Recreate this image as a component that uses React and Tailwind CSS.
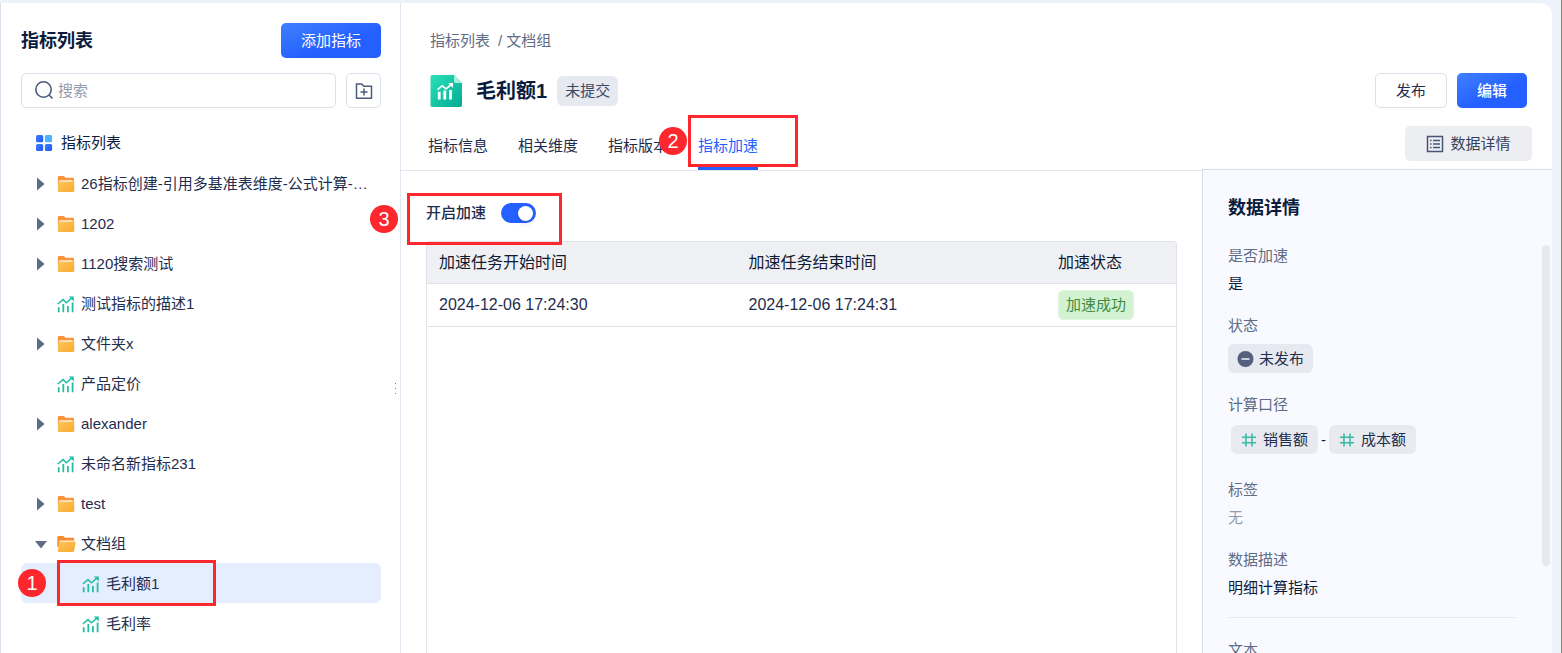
import React, { useState } from 'react';
import { clsx } from 'clsx';

const treeItems = [
  { id: 1, type: 'folder', name: '26指标创建-引用多基准表维度-公式计算-…' },
  { id: 2, type: 'folder', name: '1202' },
  { id: 3, type: 'folder', name: '1120搜索测试' },
  { id: 4, type: 'metric', name: '测试指标的描述1' },
  { id: 5, type: 'folder', name: '文件夹x' },
  { id: 6, type: 'metric', name: '产品定价' },
  { id: 7, type: 'folder', name: 'alexander' },
  { id: 8, type: 'metric', name: '未命名新指标231' },
  { id: 9, type: 'folder', name: 'test' },
  {
    id: 10,
    type: 'folder',
    name: '文档组',
    children: [
      { id: 11, type: 'metric', name: '毛利额1', step: 1 },
      { id: 12, type: 'metric', name: '毛利率' },
    ],
  },
];

const tabs = ['指标信息', '相关维度', '指标版本', '指标加速'];

const tasks = [
  { id: 1, start: '2024-12-06 17:24:30', end: '2024-12-06 17:24:31', status: '加速成功' },
];

/* Icons */
function FolderIcon() {
  return (
    <svg width="18" height="18" viewBox="0 0 18 18" className="shrink-0">
      <defs>
        <linearGradient id="folder" x1="0" y1="0" x2="1" y2="1">
          <stop offset="0" stopColor="#fcc75c" />
          <stop offset="1" stopColor="#f8a92b" />
        </linearGradient>
      </defs>
      <path d="M.8 2.400C.8 1.600 1.400 1 2.200 1h4.600l1.800 1.800h7c.8 0 1.400.6 1.400 1.400V9H.8z" fill="#fb9438" />
      <rect x="2.200" y="5.200" width="13.500" height="3" rx=".5" fill="#fff1d6" />
      <path d="M.8 6.700h16.400v8.800c0 .9-.6 1.500-1.500 1.500H2.300c-.9 0-1.500-.6-1.500-1.500z" fill="url(#folder)" />
    </svg>
  );
}

function FolderOpenIcon() {
  return (
    <svg width="20" height="18" viewBox="0 0 20 18" className="-mr-0.5 shrink-0">
      <path d="M.3 2.400C.3 1.600.9 1 1.700 1h4.600l1.800 1.800h7.700c.8 0 1.400.6 1.400 1.400V12H.3z" fill="#f88a2e" />
      <path d="M2.400 5.500h14.800V7H2.400z" fill="#fff1d6" />
      <path d="M3.200 6.700h14.400c.8 0 1.200.5 1 1.300l-1.500 7.800c-.1.700-.7 1.200-1.400 1.200H2c-.9 0-1.400-.6-1.200-1.400l1.100-7.800c.1-.7.600-1.100 1.300-1.100z" fill="url(#folder)" />
    </svg>
  );
}

function MetricIcon({ size = 18, className }) {
  return (
    <svg width={size} height={size} viewBox="0 0 18 18" fill="none" stroke="currentColor" className={clsx('shrink-0', className)}>
      <path d="M.8 9 6 4.600l3.400 3.200L15 2.900" strokeWidth="1.500" />
      <path d="M11.800 1.400h5v5z" fill="currentColor" stroke="none" />
      <path d="M1.700 12.200v5M6.300 9v8.200M10.900 11v6.200M15.600 7.500v9.700" strokeWidth="1.800" />
    </svg>
  );
}

function MetricFileIcon() {
  return (
    <svg width="32" height="34" viewBox="0 0 32 34" className="shrink-0">
      <defs>
        <linearGradient id="file" x1="0" y1="0" x2="1" y2="1">
          <stop offset="0" stopColor="#2be0b8" />
          <stop offset="1" stopColor="#03ab93" />
        </linearGradient>
      </defs>
      <path d="M2.500 1H24l8 8v22c0 1.200-.8 2-2 2H2.500c-1.200 0-2-.8-2-2V3c0-1.200.8-2 2-2z" fill="url(#file)" />
      <path d="M24 1l8 8h-6c-1.200 0-2-.8-2-2z" fill="#a5efdd" />
      <g stroke="#fff" fill="none">
        <path d="M7.500 15.600l4.700-3.700 3.900 3 5-4.300" strokeWidth="1.800" />
        <path d="M9.200 17.800V25.500M14.800 16.500v9M20.500 16v9.500" strokeWidth="2.800" />
      </g>
      <path d="M18 9h5v5z" fill="#fff" />
    </svg>
  );
}

function GridIcon() {
  return (
    <svg width="18" height="18" viewBox="0 0 18 18" className="shrink-0">
      <defs>
        <linearGradient id="cell" x1="0" y1="0" x2="1" y2="1">
          <stop offset="0" stopColor="#3d82ff" />
          <stop offset="1" stopColor="#1d55f5" />
        </linearGradient>
      </defs>
      <rect x="1" y="1" width="7.200" height="7.200" rx="1.500" fill="url(#cell)" />
      <rect x="9.900" y="1" width="7.200" height="7.200" rx="1.500" fill="#4fb3fb" />
      <rect x="1" y="9.900" width="7.200" height="7.200" rx="1.500" fill="url(#cell)" />
      <rect x="9.900" y="9.900" width="7.200" height="7.200" rx="1.500" fill="url(#cell)" />
    </svg>
  );
}

function SearchIcon() {
  return (
    <svg width="20" height="20" viewBox="0 0 20 20" fill="none" stroke="#4b5d7c" strokeWidth="1.600" className="shrink-0">
      <circle cx="9.500" cy="8.500" r="7.700" />
      <path d="M15 14l3.500 3.300" />
    </svg>
  );
}

function AddFolderIcon() {
  return (
    <svg width="18" height="18" viewBox="0 0 18 18" fill="none" stroke="#4b5d7c" strokeWidth="1.500">
      <path d="M1.500 2h5.200l2 2.300h7.800v11.900h-15z" />
      <path d="M9 6.500v7M5.500 10h7" />
    </svg>
  );
}

function ListIcon() {
  return (
    <svg width="18" height="18" viewBox="0 0 18 18" fill="none" stroke="#445578" strokeWidth="1.500">
      <rect x="1.500" y="1.500" width="15" height="15" />
      <path d="M4 5.500h1.500M4 9h1.500M4 12.500h1.500M7 5.500h7M7 9h7M7 12.500h7" strokeWidth="1.400" />
    </svg>
  );
}

function HashIcon() {
  return (
    <svg width="16" height="16" viewBox="0 0 16 16" fill="none" stroke="#3db9aa" strokeWidth="1.600">
      <path d="M5 1.500v13M11 1.500v13M1 5.200h14M1 10.800h14" />
    </svg>
  );
}

function Caret({ open }) {
  return (
    <svg width="12" height="14" viewBox="0 0 12 14" fill="#5d6b84" className="shrink-0">
      {open ? <path d="M0 4h12L6 11.500z" /> : <path d="M2 .5 9.500 7 2 13.500z" />}
    </svg>
  );
}

/* Red step markers */
function Step({ n, className }) {
  return (
    <span className={clsx('absolute z-20 flex size-7 items-center justify-center rounded-full bg-[#fd272d] text-xl text-white', className)}>
      {n}
    </span>
  );
}

function Frame({ className }) {
  return <span className={clsx('pointer-events-none absolute z-10 border-3 border-[#fd272d]', className)} />;
}

function TreeRow({ item, child, selected, onSelect }) {
  return (
    <li className="relative">
      <button
        onClick={() => onSelect(item.id)}
        className={clsx(
          'flex h-10 w-full items-center rounded-md pt-px text-left',
          child ? 'pl-[61px]' : item.type === 'metric' ? 'pl-9' : 'gap-2.5 pl-3.5',
          selected && 'bg-[#e5eeff]'
        )}
      >
        {item.type === 'folder' && <Caret open={!!item.children} />}
        <span className="flex items-center gap-1.5 whitespace-nowrap">
          {item.type === 'metric' && <MetricIcon className="text-[#25bda5]" />}
          {item.type === 'folder' && (item.children ? <FolderOpenIcon /> : <FolderIcon />)}
          {item.name}
        </span>
      </button>
      {item.step && (
        <>
          <Frame className="-top-[3px] left-9 h-[46px] w-[159px]" />
          <Step n={item.step} className="top-1.5 -left-[3px]" />
        </>
      )}
    </li>
  );
}

function Field({ label, children }) {
  return (
    <div className="mb-[22px]">
      <dt className="text-[#606c86]">{label}</dt>
      <dd className="mt-2 text-[#0b1b3d]">{children}</dd>
    </div>
  );
}

function MetricTag({ children }) {
  return (
    <span className="flex h-[29px] items-center gap-1.5 rounded-md bg-[#e8eaef] px-2.5 text-[#1f2d4d]">
      <HashIcon />
      {children}
    </span>
  );
}

export default function App() {
  const [selected, setSelected] = useState(11);
  const [activeTab, setActiveTab] = useState('指标加速');
  const [accelerated, setAccelerated] = useState(true);

  return (
    <div className="h-screen overflow-hidden border-r border-[#8c8670] bg-[#edf2fb] pt-[3px] pr-[9px] font-['Liberation_Sans','Noto_Sans_CJK_SC',sans-serif] text-[15px] leading-5 text-[#1f2d4d]">
      <div className="flex h-full rounded-tr-xl border-l border-[#dadfeb] bg-white">
        {/* Sidebar */}
        <aside className="relative w-[400px] shrink-0 border-r border-[#e3e6f0] pt-5 pr-[19px] pl-5">
          <div className="flex items-center justify-between">
            <h2 className="text-lg font-bold text-[#0b1b3d]">指标列表</h2>
            <button className="h-[35px] w-[100px] rounded-[5px] bg-linear-to-br from-[#4080ff] to-[#245fff] to-60% text-white">
              添加指标
            </button>
          </div>

          <div className="mt-[15px] flex gap-2.5">
            <label className="flex h-[35px] min-w-0 flex-1 items-center gap-1 rounded-[5px] border border-[#dcdeea] px-3">
              <SearchIcon />
              <input
                type="text"
                aria-label="搜索"
                placeholder="搜索"
                className="min-w-0 flex-1 outline-none placeholder:text-[#939cae]"
              />
            </label>
            <button aria-label="新建文件夹" className="flex size-[35px] items-center justify-center rounded-[5px] border border-[#dcdeea]">
              <AddFolderIcon />
            </button>
          </div>

          <div className="mt-[15px] flex h-10 items-center gap-2 pl-3.5 text-[#0b1b3d]">
            <GridIcon />
            指标列表
          </div>
          <ul>
            {treeItems.map((item) => (
              <React.Fragment key={item.id}>
                <TreeRow item={item} selected={selected === item.id} onSelect={setSelected} />
                {item.children?.map((c) => (
                  <TreeRow key={c.id} item={c} child selected={selected === c.id} onSelect={setSelected} />
                ))}
              </React.Fragment>
            ))}
          </ul>

          {/* Resize grip */}
          <div className="absolute top-[380px] right-1 flex flex-col gap-[4px]">
            <span className="size-px bg-[#7d8596]" />
            <span className="size-px bg-[#7d8596]" />
            <span className="size-px bg-[#7d8596]" />
          </div>
        </aside>

        {/* Main */}
        <main className="flex min-w-0 flex-1 flex-col">
          <header className="pt-7 pr-[25px] pl-[29px]">
            <nav className="flex gap-2 text-[#606c86]">
              <a href="#list">指标列表</a>
              <span className="flex gap-1">
                <span>/</span>
                <a href="#group">文档组</a>
              </span>
            </nav>
            <div className="mt-[22px] flex h-[35px] items-center">
              <MetricFileIcon />
              <h1 className="ml-3.5 text-xl font-bold text-[#0b1b3d]">毛利额1</h1>
              <span className="ml-2.5 flex h-[30px] items-center rounded-md bg-[#e6e9f0] px-2 text-[#3a4866]">未提交</span>
              <div className="ml-auto flex gap-2.5">
                <button className="h-[35px] w-[72px] rounded-[5px] border border-[#dcdeea]">发布</button>
                <button className="h-[35px] w-[70px] rounded-[5px] bg-linear-to-br from-[#4080ff] to-[#245fff] to-60% font-medium text-white">
                  编辑
                </button>
              </div>
            </div>
          </header>

          <div className="flex min-h-0 flex-1">
            <section className="flex min-w-0 flex-1 flex-col">
              <nav className="flex h-[63px] shrink-0 items-end gap-[30px] border-b border-[#e3e6f0] pl-[27px]">
                {tabs.map((tab) => (
                  <a
                    key={tab}
                    href="#tab"
                    onClick={() => setActiveTab(tab)}
                    className={clsx(
                      'relative border-b-3 pb-[11px]',
                      activeTab === tab ? 'border-[#245fff] text-[#245fff]' : 'border-transparent'
                    )}
                  >
                    {tab}
                    {tab === '指标加速' && (
                      <>
                        <Frame className="-top-[21px] -left-2.5 h-[52px] w-[110px]" />
                        <Step n={2} className="-top-[9px] -left-[39px]" />
                      </>
                    )}
                  </a>
                ))}
              </nav>

              <div className="flex flex-1 flex-col px-[25px]">
                <label className="relative mt-8 flex h-5 items-center gap-[15px] self-start font-medium">
                  开启加速
                  <input
                    type="checkbox"
                    role="switch"
                    checked={accelerated}
                    onChange={(e) => setAccelerated(e.target.checked)}
                    className="peer sr-only"
                  />
                  <span className="flex h-5 w-[35px] items-center rounded-full bg-gray-300 px-[3px] peer-checked:justify-end peer-checked:bg-[#245fff]">
                    <span className="size-[15px] rounded-full bg-white shadow-md" />
                  </span>
                  <Frame className="-top-2.5 -left-[19px] h-[52px] w-[155px]" />
                  <Step n={3} className="top-0.5 -left-14 font-normal" />
                </label>

                <div className="mt-[18px] flex-1 rounded-t-[4px] border border-b-0 border-[#e1e3e8]">
                  <table className="w-full table-fixed text-left text-base leading-5">
                    <thead>
                      <tr className="h-[41px] border-b border-[#e1e3e8] bg-[#eff0f4] text-[#101a33]">
                        <th className="px-3 pt-0.5 font-normal">加速任务开始时间</th>
                        <th className="px-3 pt-0.5 font-normal">加速任务结束时间</th>
                        <th className="w-[130px] px-3 pt-0.5 font-normal">加速状态</th>
                      </tr>
                    </thead>
                    <tbody>
                      {tasks.map((task) => (
                        <tr key={task.id} className="h-[43px] border-b border-[#e1e3e8]">
                          <td className="px-3">{task.start}</td>
                          <td className="px-3">{task.end}</td>
                          <td className="px-3">
                            <span className="flex h-[30px] w-fit items-center rounded-[5px] border border-[#e2f5e1] bg-[#d3f2d1] px-[7px] text-[15px] text-[#3f8b42]">
                              {task.status}
                            </span>
                          </td>
                        </tr>
                      ))}
                    </tbody>
                  </table>
                </div>
              </div>
            </section>

            {/* Data details */}
            <div className="flex w-[350px] shrink-0 flex-col pt-[18px]">
              <button className="mr-5 flex h-[35px] w-[127px] shrink-0 items-center justify-center gap-1.5 self-end rounded-[5px] bg-[#edeef2] text-[#34425f]">
                <ListIcon />
                数据详情
              </button>
              <aside className="relative mt-2 min-h-0 flex-1 overflow-hidden border-t border-l border-[#dadde8] bg-[#f9faff] pt-7 pr-9 pl-[25px]">
                <h2 className="mb-7 text-lg leading-5 font-bold text-[#0b1b3d]">数据详情</h2>
                <dl>
                  <Field label="是否加速">是</Field>
                  <Field label="状态">
                    <span className="flex h-[29px] w-fit items-center gap-1 rounded-md bg-[#e6e9f0] px-[9px] text-[#1f2d4d]">
                      <svg width="18" height="18" viewBox="0 0 18 18">
                        <circle cx="8.500" cy="9" r="8" fill="#53617c" />
                        <path d="M4.500 9h8" stroke="#e6e9f0" strokeWidth="1.600" />
                      </svg>
                      未发布
                    </span>
                  </Field>
                  <Field label="计算口径">
                    <span className="flex items-center gap-[3px] pt-0.5 pb-1 pl-[3px]">
                      <MetricTag>销售额</MetricTag>
                      <span>-</span>
                      <MetricTag>成本额</MetricTag>
                    </span>
                  </Field>
                  <Field label="标签">
                    <span className="text-[#939cae]">无</span>
                  </Field>
                  <Field label="数据描述">明细计算指标</Field>
                  <hr className="-mt-[3px] mb-[22px] border-[#e6e8ee]" />
                  <div className="text-[#606c86]">文本</div>
                </dl>
                <span className="absolute top-[75px] right-0.5 h-[321px] w-2 rounded-full bg-[#e8e9ee]" />
              </aside>
            </div>
          </div>
        </main>
      </div>
    </div>
  );
}
